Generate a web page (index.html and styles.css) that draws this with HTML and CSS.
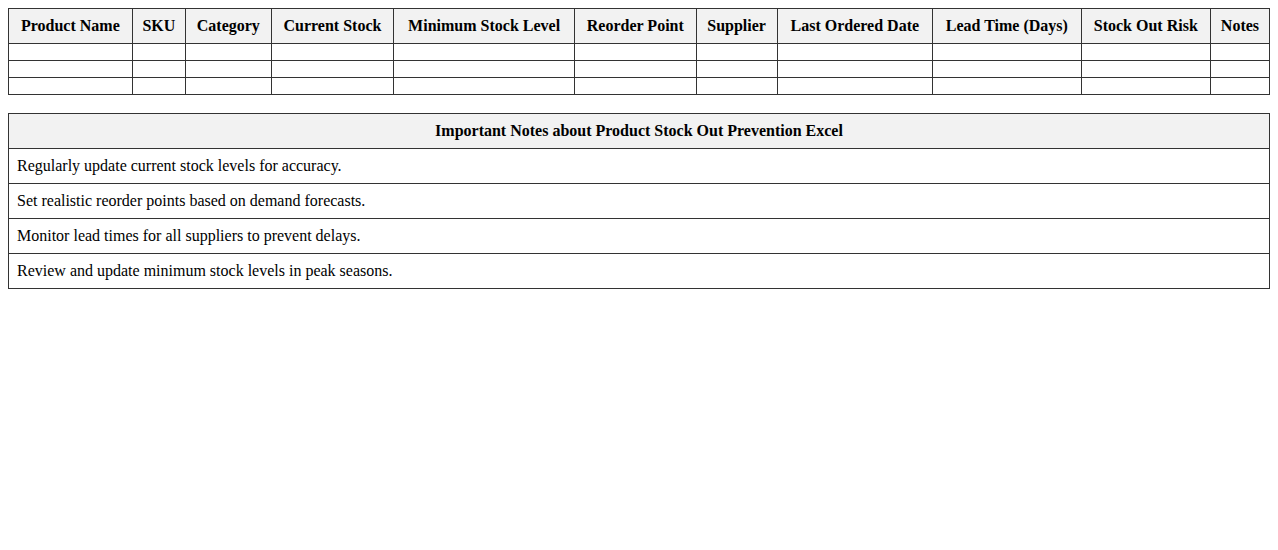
FILE: index.html
```html
<!DOCTYPE html>
<html>
<head>
<meta charset="utf-8">
<link rel="stylesheet" href="styles.css">
</head>
<body>
<table class="grid">
<thead>
<tr><th>Product Name</th><th>SKU</th><th>Category</th><th>Current Stock</th><th>Minimum Stock Level</th><th>Reorder Point</th><th>Supplier</th><th>Last Ordered Date</th><th>Lead Time (Days)</th><th>Stock Out Risk</th><th>Notes</th></tr>
</thead>
<tbody>
<tr><td></td><td></td><td></td><td></td><td></td><td></td><td></td><td></td><td></td><td></td><td></td></tr>
<tr><td></td><td></td><td></td><td></td><td></td><td></td><td></td><td></td><td></td><td></td><td></td></tr>
<tr><td></td><td></td><td></td><td></td><td></td><td></td><td></td><td></td><td></td><td></td><td></td></tr>
</tbody>
</table>
<table class="grid notes">
<thead>
<tr><th>Important Notes about Product Stock Out Prevention Excel</th></tr>
</thead>
<tbody>
<tr><td>Regularly update current stock levels for accuracy.</td></tr>
<tr><td>Set realistic reorder points based on demand forecasts.</td></tr>
<tr><td>Monitor lead times for all suppliers to prevent delays.</td></tr>
<tr><td>Review and update minimum stock levels in peak seasons.</td></tr>
</tbody>
</table>
</body>
</html>
```
FILE: styles.css
```css
body {
  margin: 8px;
  font-family: "Liberation Serif", "Times New Roman", serif;
  font-size: 16px;
  color: #000;
  background: #fff;
}
.grid {
  width: 100%;
  border-collapse: collapse;
  margin-bottom: 18px;
}
.grid th, .grid td {
  border: 1px solid #333;
  padding: 8px;
}
.grid th {
  background: #f2f2f2;
  font-weight: bold;
  text-align: center;
}
.grid td {
  text-align: left;
}
```
